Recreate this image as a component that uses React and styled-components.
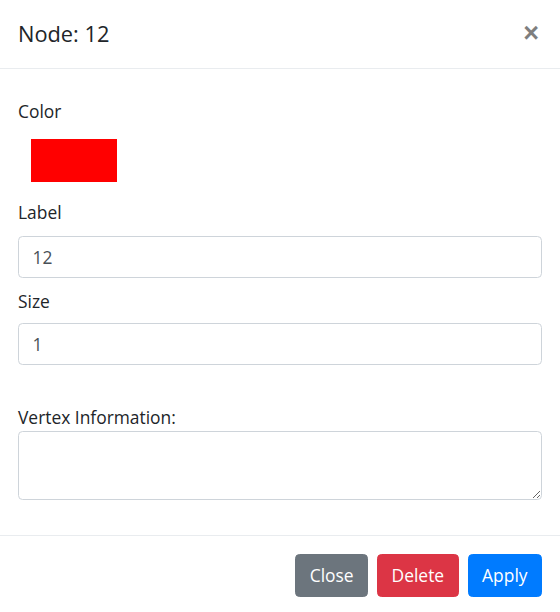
import React from 'react';
import styled, {createGlobalStyle} from 'styled-components';

const GlobalStyle = createGlobalStyle`
  html, body {
    margin: 0;
    padding: 0;
    background: #ffffff;
  }
  body {
    font-family: "Segoe UI", "Open Sans", "Noto Sans", sans-serif;
    color: #212529;
  }
`;

const ModalContent = styled.div`
  width: 560px;
  height: 612px;
  overflow: hidden;
  background: #ffffff;
  display: flex;
  flex-direction: column;
  box-sizing: border-box;
`;

const Header = styled.div`
  display: flex;
  align-items: flex-start;
  justify-content: space-between;
  padding: 17px 18px 18px 18px;
  border-bottom: 1px solid #e9ecef;
  height: 69px;
  box-sizing: border-box;
`;

const Title = styled.h5`
  margin: 0;
  font-size: 21.8px;
  line-height: 33px;
  font-weight: 500;
  color: #212529;
`;

const CloseX = styled.button`
  border: 0;
  background: transparent;
  padding: 0;
  margin: 3px 3px 0 0;
  font-family: "Liberation Sans", Arial, sans-serif;
  font-size: 27px;
  font-weight: 700;
  line-height: 1;
  color: #000;
  opacity: 0.5;
  cursor: pointer;
`;

const Body = styled.div`
  display: flex;
  flex-direction: column;
  padding: 29px 18px 35px 18px;
`;

const Label = styled.label`
  display: block;
  font-size: 17.4px;
  line-height: 27px;
  margin-top: ${(props) => props.top || 0}px;
`;

const Swatch = styled.div`
  width: 86px;
  height: 43px;
  margin: 14px 0 0 13px;
  background: ${(props) => props.color};
`;

const field = `
  display: block;
  width: 100%;
  box-sizing: border-box;
  border: 1px solid #ced4da;
  border-radius: 4.5px;
  padding: 6.75px 13.5px;
  font-family: "Segoe UI", "Open Sans", "Noto Sans", sans-serif;
  font-size: 17.4px;
  line-height: 27px;
  color: #495057;
  background: #ffffff;
  outline: none;
`;

const Input = styled.input`
  ${field};
  height: 42px;
  margin-top: ${(props) => props.top || 0}px;
`;

const TextArea = styled.textarea`
  ${field};
  height: 69px;
  resize: vertical;
`;

const Footer = styled.div`
  display: flex;
  justify-content: flex-end;
  gap: 9px;
  padding: 18px 18px;
  border-top: 1px solid #e9ecef;
`;

const Button = styled.button`
  border: 1px solid ${(props) => props.bg};
  background: ${(props) => props.bg};
  color: #ffffff;
  border-radius: 4.5px;
  height: 43px;
  padding: 0 13.5px;
  font-family: "Segoe UI", "Open Sans", "Noto Sans", sans-serif;
  font-size: 17.4px;
  line-height: 27px;
  cursor: pointer;
`;

function App() {
    return (
        <>
        <GlobalStyle />
        <ModalContent>
            <Header>
                <Title>Node: 12</Title>
                <CloseX aria-label="Close">×</CloseX>
            </Header>
            <Body>
                <Label>Color</Label>
                <Swatch color={'#ff0000'} />
                <Label top={17}>Label</Label>
                <Input top={10} defaultValue="12" />
                <Label top={10}>Size</Label>
                <Input top={8} defaultValue="1" />
                <Label top={39}>Vertex Information:</Label>
                <TextArea />
            </Body>
            <Footer>
                <Button bg={'#6c757d'}>Close</Button>
                <Button bg={'#dc3545'}>Delete</Button>
                <Button bg={'#007bff'}>Apply</Button>
            </Footer>
        </ModalContent>
        </>
    );
}

export default App;
